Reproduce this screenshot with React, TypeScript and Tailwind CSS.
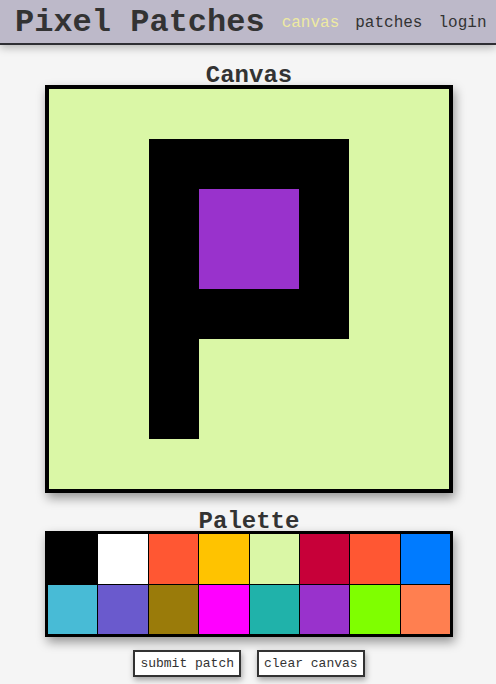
import React from 'react';

// canvas pixels: g = background, k = black, p = purple
const pixels = [
  'gggggggg',
  'ggkkkkgg',
  'ggkppkgg',
  'ggkppkgg',
  'ggkkkkgg',
  'ggkggggg',
  'ggkggggg',
  'gggggggg',
];

const pixelColor: Record<string, string> = {
  g: 'bg-[#daf7a6]',
  k: 'bg-black',
  p: 'bg-[#9932cc]',
};

const palette = [
  'bg-[#000000]',
  'bg-[#ffffff]',
  'bg-[#ff5733]',
  'bg-[#ffc300]',
  'bg-[#daf7a6]',
  'bg-[#c70039]',
  'bg-[#ff5733]',
  'bg-[#007bff]',
  'bg-[#48bbd6]',
  'bg-[#6a5acd]',
  'bg-[#9a7b0a]',
  'bg-[#ff00ff]',
  'bg-[#20b2aa]',
  'bg-[#9932cc]',
  'bg-[#7fff00]',
  'bg-[#ff7f50]',
];

const mono = "font-['Liberation_Mono','Courier_New',monospace]";

export default function App() {
  return (
    <div className={`min-h-[684px] bg-[#f5f5f5] text-[#333] ${mono}`}>
      {/* Header */}
      <header className="h-[45px] bg-[#bdb9c9] border-b-2 border-[#2e2e33] shadow-[0_3px_8px_rgba(0,0,0,0.25)] flex items-center pt-[3px] pl-[15px]">
        <h1 className="text-[32px] font-bold leading-none">Pixel Patches</h1>
        <nav className="flex items-center gap-[16px] ml-[17px] text-[16px]">
          <a className="text-[#eeeaa2]">canvas</a>
          <a>patches</a>
          <a>login</a>
        </nav>
      </header>

      <main className="flex flex-col items-center pl-[2px]">
        <h2 className="mt-[22px] text-[24px] font-bold leading-[18px]">Canvas</h2>
        <div className="w-[408px] h-[408px] border-4 border-black grid grid-cols-8 shadow-[2px_5px_10px_rgba(0,0,0,0.4)]">
          {pixels.map((row, r) =>
            row.split('').map((c, i) => <div key={`${r}-${i}`} className={pixelColor[c]} />)
          )}
        </div>

        <h2 className="mt-[20px] text-[24px] font-bold leading-[18px]">Palette</h2>
        <div className="w-[408px] h-[106px] border-[3px] border-black bg-black grid grid-cols-8 grid-rows-2 gap-px shadow-[2px_5px_10px_rgba(0,0,0,0.4)]">
          {palette.map((c, i) => (
            <div key={i} className={c} />
          ))}
        </div>

        <div className="mt-[13px] flex gap-[16px]">
          <button className="h-[27px] px-[5px] border-2 border-[#333] bg-white text-[13px] leading-none shadow-[1px_3px_6px_rgba(0,0,0,0.35)]">
            submit patch
          </button>
          <button className="h-[27px] px-[5px] border-2 border-[#333] bg-white text-[13px] leading-none shadow-[1px_3px_6px_rgba(0,0,0,0.35)]">
            clear canvas
          </button>
        </div>
      </main>
    </div>
  );
}
